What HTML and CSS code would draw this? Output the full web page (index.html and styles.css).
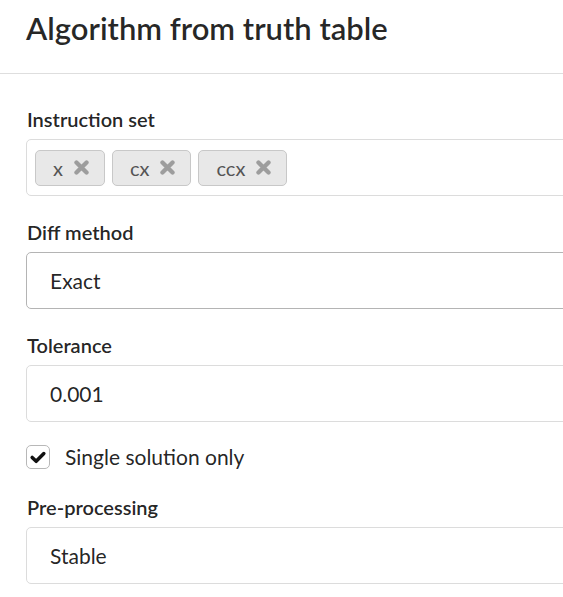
FILE: index.html
```html
<!DOCTYPE html>
<html>
<head>
<meta charset="utf-8">
<link rel="stylesheet" href="styles.css">
</head>
<body>
<div class="modal">
  <div class="header">Algorithm from truth table</div>
  <div class="content">
    <div class="field">
      <div class="label">Instruction set</div>
      <div class="box multi">
        <span class="tag">x <svg class="del" viewBox="0 0 14 14"><path d="M2.3 2.3 L11.7 11.7 M11.7 2.3 L2.3 11.7"/></svg></span>
        <span class="tag">cx <svg class="del" viewBox="0 0 14 14"><path d="M2.3 2.3 L11.7 11.7 M11.7 2.3 L2.3 11.7"/></svg></span>
        <span class="tag">ccx <svg class="del" viewBox="0 0 14 14"><path d="M2.3 2.3 L11.7 11.7 M11.7 2.3 L2.3 11.7"/></svg></span>
      </div>
    </div>
    <div class="field">
      <div class="label">Diff method</div>
      <div class="box dark">Exact</div>
    </div>
    <div class="field">
      <div class="label">Tolerance</div>
      <div class="box">0.001</div>
    </div>
    <div class="field check">
      <span class="cb"><svg viewBox="0 0 24 24"><path d="M5 12.5 L9.8 17.2 L19 7.8"/></svg></span>
      <span class="cb-label">Single solution only</span>
    </div>
    <div class="field">
      <div class="label">Pre-processing</div>
      <div class="box">Stable</div>
    </div>
  </div>
</div>
</body>
</html>
```

FILE: styles.css
```css
html, body {
  margin: 0;
  padding: 0;
  background: #fff;
  overflow: hidden;
}
body {
  font-family: Lato, "Open Sans", sans-serif;
  color: rgba(0,0,0,0.87);
}
.modal {
  width: 620px;
}
.header {
  height: 74px;
  box-sizing: border-box;
  padding: 10px 0 0 26px;
  font-size: 31px;
  font-weight: 600;
  line-height: 36px;
  color: rgba(0,0,0,0.85);
  border-bottom: 1px solid #dedede;
}
.content {
  padding: 33px 0 0 26px;
}
.field {
  margin-bottom: 24px;
}
.label {
  font-size: 20px;
  font-weight: 600;
  line-height: 24px;
  margin: 0 0 8px 1px;
}
.box {
  box-sizing: border-box;
  height: 57px;
  border: 1px solid #dcdcdc;
  border-radius: 5px;
  padding: 0 0 0 23px;
  display: flex;
  align-items: center;
  font-size: 21px;
}
.box.dark {
  border-color: #b4b4b4;
}
.box.multi {
  padding: 0 0 0 8px;
  gap: 7px;
}
.tag {
  box-sizing: border-box;
  height: 36px;
  display: flex;
  align-items: center;
  padding: 0 15px 0 17px;
  gap: 11px;
  background: #e8e8e8;
  border: 1px solid #c8c8c8;
  border-radius: 5px;
  font-size: 20px;
  color: #555;
}
.del {
  width: 15px;
  height: 15px;
}
.del path {
  stroke: #9d9d9d;
  stroke-width: 4;
  stroke-linecap: round;
  fill: none;
}
.check {
  display: flex;
  align-items: center;
  gap: 15px;
  margin-top: -2px;
  margin-bottom: 26px;
}
.cb {
  box-sizing: border-box;
  width: 24px;
  height: 24px;
  border: 1px solid #b8b8b8;
  border-radius: 5px;
  display: flex;
  align-items: center;
  justify-content: center;
}
.cb svg {
  width: 20px;
  height: 20px;
}
.cb path {
  stroke: #111;
  stroke-width: 4.2;
  stroke-linecap: round;
  stroke-linejoin: round;
  fill: none;
}
.cb-label {
  font-size: 21px;
  color: rgba(0,0,0,0.87);
}
```
